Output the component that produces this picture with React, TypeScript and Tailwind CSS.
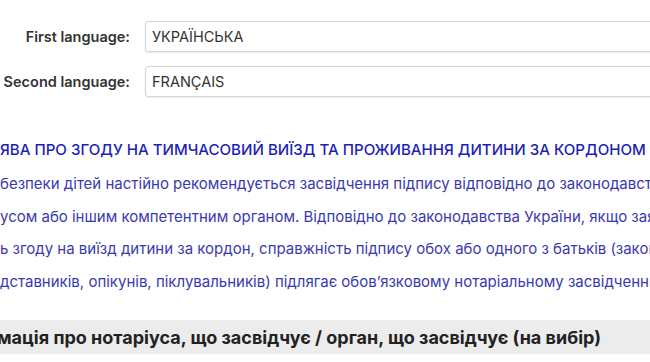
import React from 'react'

const font = { fontFamily: 'Inter, "Noto Sans", sans-serif' }

function LangRow({ label, value }: { label: string; value: string }) {
  return (
    <div className="flex items-center">
      <label className="w-[145px] shrink-0 whitespace-nowrap pr-[15px] text-right text-[14.5px] font-semibold text-[#333]">
        {label}
      </label>
      <div className="flex h-[31px] w-[520px] shrink-0 items-center rounded-[3px] border border-[#d4d4d4] bg-white px-[6px] text-[14.5px] text-[#333] shadow-[0_1px_2px_rgba(0,0,0,0.08)]">
        {value}
      </div>
    </div>
  )
}

const lines = [
  'безпеки дітей настійно рекомендується засвідчення підпису відповідно до законодавства',
  'усом або іншим компетентним органом. Відповідно до законодавства України, якщо заява',
  'ь згоду на виїзд дитини за кордон, справжність підпису обох або одного з батьків (законних',
  'дставників, опікунів, піклувальників) підлягає обов’язковому нотаріальному засвідченню.',
]

export default function App() {
  return (
    <div className="h-[362px] w-[650px] overflow-hidden bg-white" style={font}>
      <div className="flex flex-col gap-[14px] pt-[21px]">
        <LangRow label="First language:" value="УКРАЇНСЬКА" />
        <LangRow label="Second language:" value="FRANÇAIS" />
      </div>

      <h2 className="mt-[42px] whitespace-nowrap text-[15.1px] font-medium leading-[22px] text-[#1e1eb9]">
        ЯВА ПРО ЗГОДУ НА ТИМЧАСОВИЙ ВИЇЗД ТА ПРОЖИВАННЯ ДИТИНИ ЗА КОРДОНОМ
      </h2>

      <div className="mt-[7px] text-[15px] leading-[32.5px] text-[#3a3ab0]">
        {lines.map((l) => (
          <p key={l} className="whitespace-nowrap">
            {l}
          </p>
        ))}
      </div>

      <div className="mt-[22px] flex h-[34px] items-center whitespace-nowrap bg-[#ececec] text-[18px] font-bold text-[#222]">
        <span className="-ml-[3px]">мація про нотаріуса, що засвідчує / орган, що засвідчує (на вибір)</span>
      </div>
    </div>
  )
}
